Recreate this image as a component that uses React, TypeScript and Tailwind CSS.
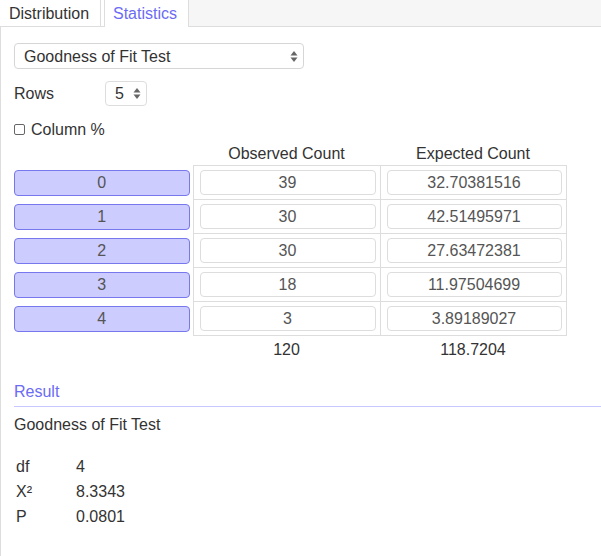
const rows = [
  { label: "0", observed: "39", expected: "32.70381516" },
  { label: "1", observed: "30", expected: "42.51495971" },
  { label: "2", observed: "30", expected: "27.63472381" },
  { label: "3", observed: "18", expected: "11.97504699" },
  { label: "4", observed: "3", expected: "3.89189027" },
];

const results = [
  { name: "df", value: "4" },
  { name: "X²", value: "8.3343" },
  { name: "P", value: "0.0801" },
];

function Arrows() {
  return (
    <svg width="8" height="13" viewBox="0 0 8 13" className="shrink-0">
      <path d="M4 1 L7.5 5.5 L0.5 5.5 Z" fill="#666" />
      <path d="M4 12 L7.5 7.5 L0.5 7.5 Z" fill="#666" />
    </svg>
  );
}

export default function App() {
  return (
    <div className="min-h-[556px] w-[601px] bg-white text-[16px] text-[#333]" style={{ fontFamily: '"Liberation Sans", Arial, sans-serif' }}>
      <div className="flex h-[27px]">
        <div className="flex w-[101px] items-center border-r border-b border-[#ddd] pt-[1px] pl-[9px]">Distribution</div>
        <div className="w-[3px] border-b border-[#ddd]" />
        <div className="flex w-[85px] items-center border-x border-[#ddd] pt-[1px] pl-[8px] text-[#6b6bf5]">Statistics</div>
        <div className="flex-1 border-b border-[#ddd] bg-[#f6f6f6]" />
      </div>

      <div className="min-h-[529px] border-l border-[#ddd] pt-[16px] pl-[13px]">
        <div className="flex h-[26px] w-[290px] items-center justify-between rounded-[4px] border border-[#d6d6d6] pt-[1px] pr-[5px] pl-[9px]">
          <span>Goodness of Fit Test</span>
          <Arrows />
        </div>

        <div className="mt-[12px] flex h-[25px] items-center">
          <span className="w-[91px]">Rows</span>
          <div className="flex h-[25px] w-[42px] items-center justify-between rounded-[4px] border border-[#ddd] pr-[5px] pl-[9px]">
            <span>5</span>
            <Arrows />
          </div>
        </div>

        <label className="mt-[12px] flex h-[22px] items-center gap-[6px] pt-[1px]">
          <span className="h-[11px] w-[11px] rounded-[2px] border border-[#666] bg-white" />
          <span>Column %</span>
        </label>

        <table className="border-collapse">
          <thead>
            <tr className="h-[25px]">
              <th className="w-[179px] p-0" />
              <th className="w-[187px] p-0 pt-[3px] text-center leading-[22px] font-normal">Observed Count</th>
              <th className="w-[186px] p-0 pt-[3px] text-center leading-[22px] font-normal">Expected Count</th>
            </tr>
          </thead>
          <tbody>
            {rows.map((r) => (
              <tr key={r.label} className="h-[34px]">
                <td className="p-0 pr-[3px]">
                  <div className="flex h-[26px] items-center justify-center rounded-[4px] border border-[#7777ee] bg-[#ccccff] pt-[1px] text-[#555]">
                    {r.label}
                  </div>
                </td>
                <td className="border border-[#ddd] py-[4px] pr-[4px] pl-[6px]">
                  <div className="flex h-[25px] items-center justify-center rounded-[4px] border border-[#ddd] pt-[1px] text-[#555]">{r.observed}</div>
                </td>
                <td className="border border-[#ddd] py-[4px] pr-[4px] pl-[6px]">
                  <div className="flex h-[25px] items-center justify-center rounded-[4px] border border-[#ddd] pt-[1px] text-[#555]">{r.expected}</div>
                </td>
              </tr>
            ))}
            <tr className="h-[28px]">
              <td className="p-0" />
              <td className="p-0 pt-[1px] text-center">120</td>
              <td className="p-0 pt-[1px] text-center">118.7204</td>
            </tr>
          </tbody>
        </table>

        <div className="mt-[15px] border-b border-[#c8c8ff] pt-[2px] pb-[3px] leading-[22px] text-[#6b6bf5]">Result</div>
        <div className="mt-[7px] leading-[22px]">Goodness of Fit Test</div>

        <div className="mt-[19px]">
          {results.map((r) => (
            <div key={r.name} className="flex h-[25px] items-center">
              <span className="w-[62px] pl-[2px]">{r.name}</span>
              <span>{r.value}</span>
            </div>
          ))}
        </div>
      </div>
    </div>
  );
}
